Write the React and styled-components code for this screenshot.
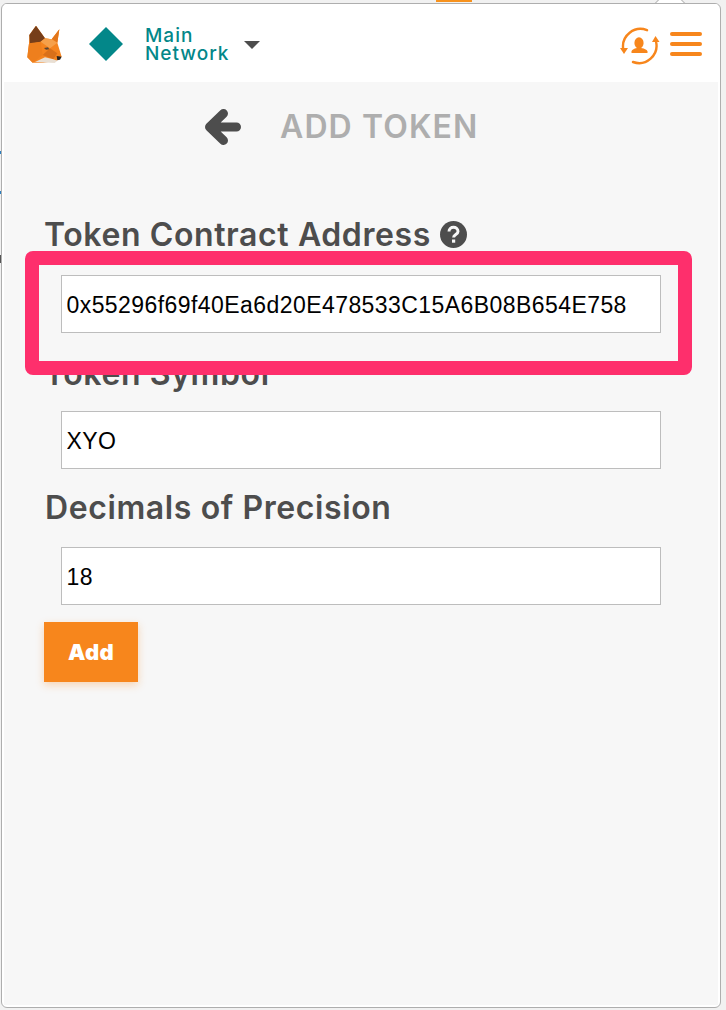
import React from "react";
import styled, { createGlobalStyle } from "styled-components";

const Global = createGlobalStyle`
  html, body { margin: 0; padding: 0; background: #fff; }
  body { width: 726px; height: 1010px; overflow: hidden; font-family: "Inter", "Liberation Sans", sans-serif; }
  * { box-sizing: border-box; }
`;

const Stage = styled.div`
  position: relative;
  width: 726px;
  height: 1010px;
  padding: 3px 5px 2px 1px;
  background: #f1f1f1;
`;

const PageMark = styled.div`
  position: absolute;
  left: ${(p) => p.$x}px;
  top: ${(p) => p.$y}px;
  width: ${(p) => p.$w}px;
  height: ${(p) => p.$h}px;
  background: ${(p) => p.$color};
`;

const Notch = styled.div`
  position: absolute;
  left: 656px;
  top: -5px;
  width: 28px;
  height: 28px;
  background: #fff;
  box-shadow: 0 0 0 1px #b8b8b8;
  transform: rotate(45deg);
`;

const Popup = styled.div`
  position: relative;
  width: 100%;
  height: 100%;
  display: flex;
  flex-direction: column;
  padding: 0 2px 2px;
  background: #fff;
  border: 1px solid #aeaeae;
  border-radius: 6px;
  overflow: hidden;
`;

const Header = styled.header`
  height: 78px;
  flex: none;
  display: flex;
  align-items: center;
  background: #fff;
  padding: 0 16px 0 23px;
`;

const FoxLogo = styled.svg`
  flex: none;
  width: 36px;
  height: 38px;
  margin-top: 2px;
`;

const Network = styled.div`
  display: flex;
  align-items: center;
  margin-left: 31px;
  flex: 1;
`;

const Diamond = styled.div`
  width: 24px;
  height: 24px;
  background: #038789;
  transform: rotate(45deg);
  margin-top: 2px;
`;

const NetworkName = styled.div`
  margin-left: 27px;
  color: #038789;
  font-size: 19px;
  line-height: 18px;
  font-weight: 500;
  letter-spacing: 1px;
  margin-top: 3px;
`;

const Caret = styled.div`
  width: 0;
  height: 0;
  margin: 4px 0 0 14px;
  border-left: 8px solid transparent;
  border-right: 8px solid transparent;
  border-top: 8px solid #4d4d4d;
`;

const SyncIcon = styled.svg`
  flex: none;
  width: 40px;
  height: 38px;
  margin-top: 6px;
`;

const Burger = styled.div`
  display: flex;
  flex-direction: column;
  gap: 6px;
  margin-left: 10px;
  margin-top: 2px;
`;

const BurgerBar = styled.span`
  display: block;
  width: 32px;
  height: 4px;
  border-radius: 2px;
  background: #f7861c;
`;

const Content = styled.main`
  flex: 1;
  display: flex;
  flex-direction: column;
  background: #f7f7f7;
`;

const TitleRow = styled.div`
  display: flex;
  align-items: center;
  height: 90px;
  padding-left: 201px;
  flex: none;
`;

const Title = styled.h1`
  margin: 0 0 0 39px;
  font-size: 32px;
  line-height: 40px;
  font-weight: 600;
  color: #aeaeae;
  letter-spacing: 1.1px;
`;

const Form = styled.div`
  display: flex;
  flex-direction: column;
  padding: 0 0 0 40px;
`;

const Label = styled.label`
  display: flex;
  align-items: center;
  gap: 9px;
  height: 40px;
  font-size: 32px;
  font-weight: 600;
  color: #4d4d4d;
  letter-spacing: 0.6px;
  white-space: nowrap;
  margin-top: ${(p) => p.$top}px;
  margin-left: ${(p) => p.$left || 0}px;
`;

const Input = styled.input`
  display: block;
  width: 600px;
  height: 58px;
  margin: ${(p) => p.$top}px 0 0 17px;
  padding: 3px 4.5px 0;
  background: #fff;
  border: 1px solid #bdbdbd;
  border-radius: 0;
  outline: none;
  font-family: "Liberation Sans", Arial, sans-serif;
  font-size: 23px;
  letter-spacing: 0.43px;
  color: #000;
`;

const AddButton = styled.button`
  width: 94px;
  height: 60px;
  margin-top: 17px;
  padding: 0;
  border: none;
  background: #f7861c;
  color: #fff;
  font-family: "Inter", sans-serif;
  font-size: 22px;
  font-weight: 900;
  letter-spacing: 0.3px;
  box-shadow: 0 3px 8px rgba(247, 134, 28, 0.3);
`;

const Highlight = styled.div`
  position: absolute;
  left: 25px;
  top: 251px;
  width: 667px;
  height: 124px;
  border: 14px solid #fe2f6c;
  border-radius: 8px;
  pointer-events: none;
`;

const Fox = () => (
  <FoxLogo viewBox="21 15 108 114">
    <polygon points="48,17 75,55 95,58 118,28 112,68 125,110 110,122 70,128 38,128 22,112 27,70 28,45" fill="#f5841f" />
    <polygon points="48,17 75,55 62,65 30,72 28,45" fill="#763e1a" />
    <polygon points="118,28 96,56 112,68" fill="#e2761b" />
    <polygon points="75,55 95,58 112,68 90,85 62,65" fill="#f6a04a" />
    <polygon points="27,70 62,65 68,105 38,128 22,112" fill="#ee7f1d" />
    <polygon points="68,105 90,85 112,100 100,118" fill="#d9701a" />
    <polygon points="45,126 75,112 100,118 112,122 104,129" fill="#e9dfd3" />
    <polygon points="110,108 125,110 120,119 112,121" fill="#2a2420" />
    <polygon points="72,84 84,82 88,88 78,89" fill="#5b4636" />
  </FoxLogo>
);

const AccountSync = () => (
  <SyncIcon viewBox="0 0 40 38" fill="none">
    <path d="M27 3.2 A17.5 17.5 0 0 0 3.2 22" stroke="#f7861c" strokeWidth="2.4" strokeLinecap="round" />
    <path d="M13 35 A17.5 17.5 0 0 0 36 14.5" stroke="#f7861c" strokeWidth="2.4" strokeLinecap="round" />
    <polygon points="0,21 8,21 4,27" fill="#f7861c" />
    <polygon points="32,15 39.5,15 35.5,9" fill="#f7861c" />
    <ellipse cx="19" cy="16" rx="4.6" ry="5.7" fill="#f7861c" />
    <path d="M11.5 26 V24.5 Q12 22 17 21 H21 Q27 22 27.5 24.5 V26 Z" fill="#f7861c" />
  </SyncIcon>
);

const BackArrow = () => (
  <svg width="36" height="36" viewBox="0 0 36 36" fill="none">
    <path d="M18.5 4.5 L4.5 18 L18.5 31.5 M6 18 H31.5" stroke="#4d4d4d" strokeWidth="9" strokeLinecap="round" strokeLinejoin="round" />
  </svg>
);

const Help = () => (
  <svg width="27" height="27" viewBox="0 0 27 27">
    <circle cx="13.5" cy="13.5" r="13.5" fill="#4d4d4d" />
    <path d="M9 10.5 C9 4.8 18 4.8 18 10.5 C18 13.6 13.6 13.4 13.6 16.4" fill="none" stroke="#f7f7f7" strokeWidth="3" />
    <rect x="12" y="18.5" width="3.2" height="3.2" fill="#f7f7f7" />
  </svg>
);

export default function App() {
  return (
    <>
      <Global />
      <Stage>
        <PageMark $x={436} $y={0} $w={36} $h={2} $color="#f7921e" />
        <PageMark $x={0} $y={151} $w={1} $h={3} $color="#2b7fc0" />
        <PageMark $x={0} $y={191} $w={1} $h={3} $color="#2b7fc0" />
        <PageMark $x={0} $y={255} $w={1} $h={8} $color="#555" />
        <Notch />
        <Popup>
          <Header>
            <Fox />
            <Network>
              <Diamond />
              <NetworkName>
                Main
                <br />
                Network
              </NetworkName>
              <Caret />
            </Network>
            <AccountSync />
            <Burger>
              <BurgerBar />
              <BurgerBar />
              <BurgerBar />
            </Burger>
          </Header>
          <Content>
            <TitleRow>
              <BackArrow />
              <Title>ADD TOKEN</Title>
            </TitleRow>
            <Form>
              <Label $top={42}>
                Token Contract Address <Help />
              </Label>
              <Input $top={21} readOnly value="0x55296f69f40Ea6d20E478533C15A6B08B654E758" />
              <Label $top={20}>Token Symbol</Label>
              <Input $top={18} readOnly value="XYO" />
              <Label $top={18} $left={1}>Decimals of Precision</Label>
              <Input $top={20} readOnly value="18" />
              <AddButton>Add</AddButton>
            </Form>
          </Content>
        </Popup>
        <Highlight />
      </Stage>
    </>
  );
}
